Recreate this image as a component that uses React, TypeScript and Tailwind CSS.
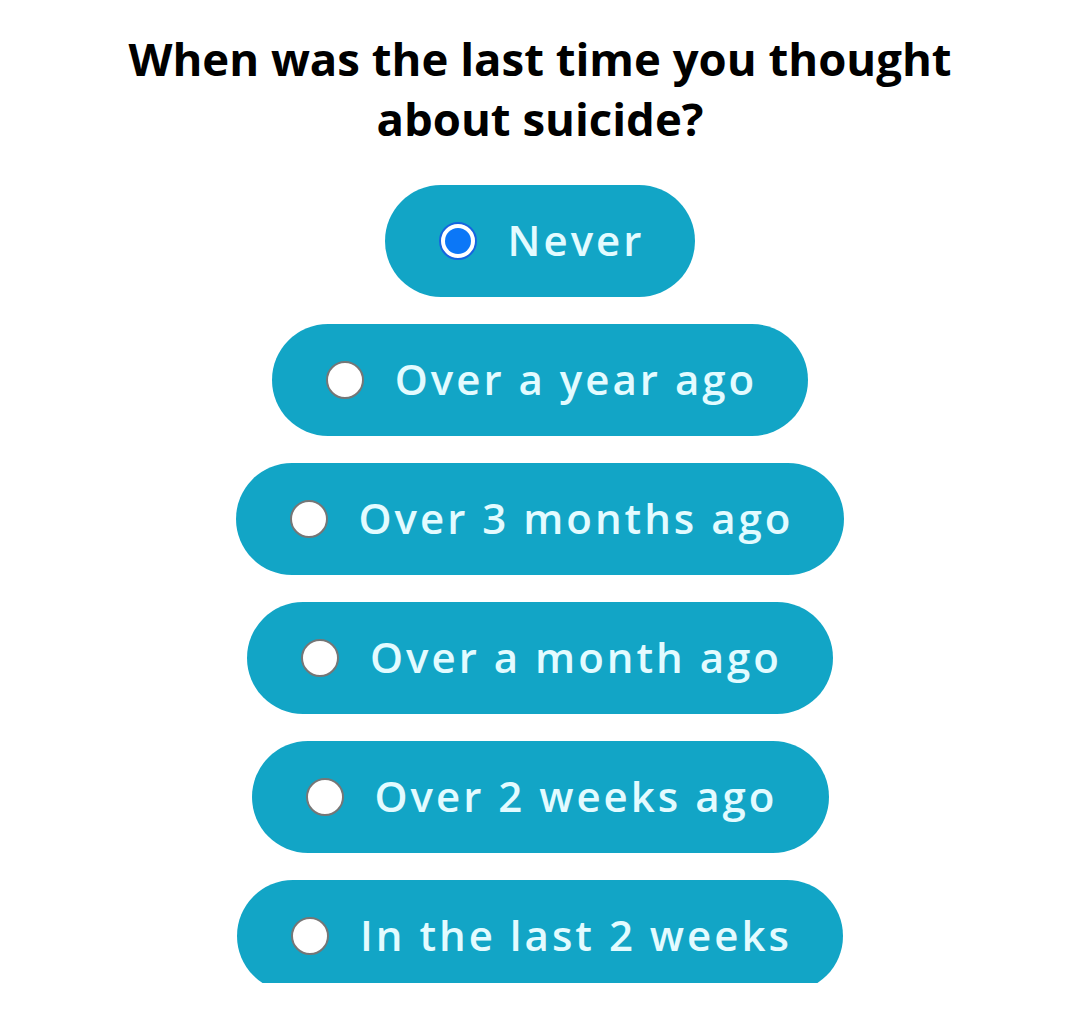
const options = [
  { label: 'Never', selected: true },
  { label: 'Over a year ago', selected: false },
  { label: 'Over 3 months ago', selected: false },
  { label: 'Over a month ago', selected: false },
  { label: 'Over 2 weeks ago', selected: false },
  { label: 'In the last 2 weeks', selected: false },
];

function Radio({ checked }: { checked: boolean }) {
  if (checked) {
    return (
      <span className="flex h-[38px] w-[38px] shrink-0 items-center justify-center rounded-full border-2 border-[#1565e0] bg-white">
        <span className="h-[26px] w-[26px] rounded-full bg-[#0b77f7]" />
      </span>
    );
  }
  return <span className="h-[38px] w-[38px] shrink-0 rounded-full border-2 border-[#767676] bg-white" />;
}

export default function App() {
  return (
    <div className="h-[983px] overflow-hidden bg-white font-['Open_Sans',sans-serif]">
      <div className="flex flex-col items-center pt-[28px]">
        <h1 className="w-[900px] text-center text-[45.5px] font-bold leading-[60px] text-black">
          When was the last time you thought about suicide?
        </h1>
        <div className="mt-[37px] flex flex-col items-center gap-[27px]">
          {options.map((o) => (
            <label
              key={o.label}
              className="flex h-[112px] items-center gap-[31px] rounded-full bg-[#12a5c6] pl-[54px] pr-[51px]"
            >
              <Radio checked={o.selected} />
              <span className="pb-[4px] text-[42px] font-semibold tracking-[3px] text-[#e3fbff]">{o.label}</span>
            </label>
          ))}
        </div>
      </div>
    </div>
  );
}
